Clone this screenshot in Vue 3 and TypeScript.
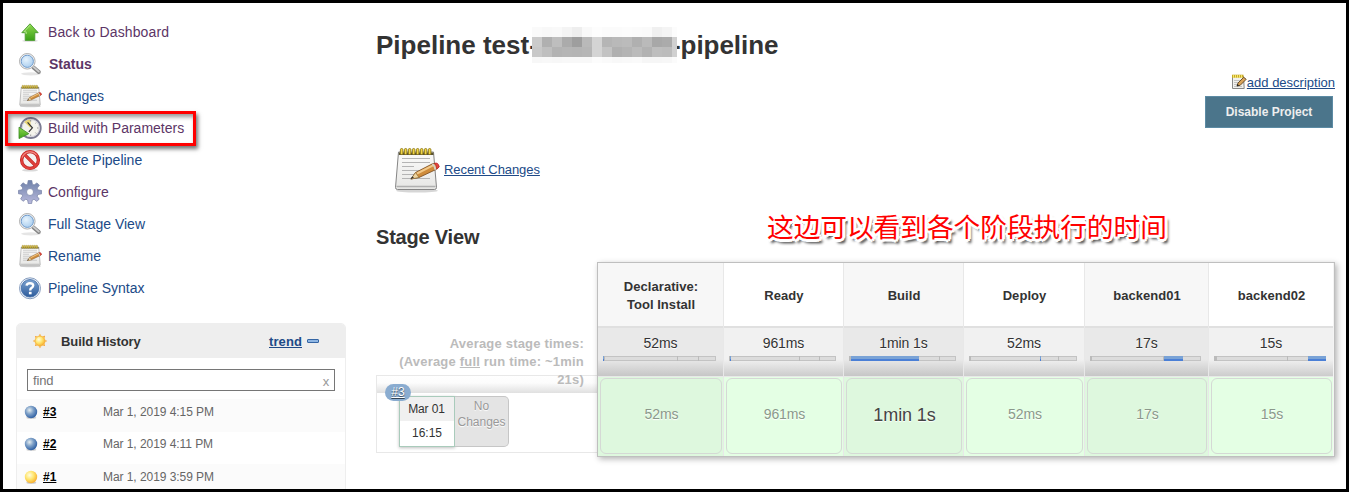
<script setup lang="ts">
interface Task { icon: string; label: string; visited?: boolean; bold?: boolean; marked?: boolean }
interface Segment { kind: 'tick' | 'fill'; left: number; width: number }
interface Stage { name: string[]; avg: string; time: string; large?: boolean; segments: Segment[] }

const tasks: Task[] = [
  { icon: 'up', label: 'Back to Dashboard', visited: true },
  { icon: 'search', label: 'Status', visited: true, bold: true },
  { icon: 'notepad', label: 'Changes' },
  { icon: 'clock', label: 'Build with Parameters', visited: true, marked: true },
  { icon: 'delete', label: 'Delete Pipeline' },
  { icon: 'gear', label: 'Configure', visited: true },
  { icon: 'search', label: 'Full Stage View' },
  { icon: 'notepad', label: 'Rename' },
  { icon: 'help', label: 'Pipeline Syntax' },
]

const builds = [
  { id: '#3', date: 'Mar 1, 2019 4:15 PM', ball: 'blue' },
  { id: '#2', date: 'Mar 1, 2019 4:11 PM', ball: 'blue' },
  { id: '#1', date: 'Mar 1, 2019 3:59 PM', ball: 'yellow' },
]

const tick = (left: number, width = 1): Segment => ({ kind: 'tick', left, width })
const fill = (left: number, width: number): Segment => ({ kind: 'fill', left, width })

const stages: Stage[] = [
  { name: ['Declarative:', 'Tool Install'], avg: '52ms', time: '52ms', segments: [fill(-1, 1), tick(0), tick(73), tick(94)] },
  { name: ['Ready'], avg: '961ms', time: '961ms', segments: [tick(-1), fill(0, 1), tick(69), tick(89)] },
  { name: ['Build'], avg: '1min 1s', time: '1min 1s', large: true, segments: [tick(-1, 2), fill(1, 68), tick(89)] },
  { name: ['Deploy'], avg: '52ms', time: '52ms', segments: [tick(-1, 2), fill(70, 1), tick(88)] },
  { name: ['backend01'], avg: '17s', time: '17s', segments: [tick(-1, 2), tick(72), fill(73, 19)] },
  { name: ['backend02'], avg: '15s', time: '15s', segments: [tick(-1, 3), tick(72), fill(93, 18)] },
]

// Grey levels of the pixelated project name, one row of blocks at a time
const mosaic: number[][] = [
  [250, 248, 249, 244, 238, 249, 253, 251, 251, 252, 251, 250, 240, 244, 252],
  [203, 176, 190, 171, 158, 185, 212, 181, 185, 187, 176, 186, 168, 171, 208],
  [200, 191, 179, 181, 180, 182, 212, 195, 176, 180, 187, 178, 190, 188, 208],
  [247, 248, 247, 248, 248, 248, 252, 250, 248, 249, 250, 246, 246, 247, 251],
]
const grey = (v: number) => `rgb(${v}, ${v}, ${v})`
</script>

<template>
  <div class="page">
    <svg class="defs" width="0" height="0" aria-hidden="true">
      <defs>
        <linearGradient id="g-green" x1="0" y1="0" x2="0" y2="1"><stop offset="0" stop-color="#8fd94f" /><stop offset="1" stop-color="#3ba017" /></linearGradient>
        <linearGradient id="g-paper" x1="0" y1="0" x2="0" y2="1"><stop offset="0" stop-color="#fbfbfa" /><stop offset="1" stop-color="#e6e6e4" /></linearGradient>
        <linearGradient id="g-gear" x1="0" y1="0" x2="0" y2="1"><stop offset="0" stop-color="#6f82aa" /><stop offset="1" stop-color="#b9b9dc" /></linearGradient>
        <linearGradient id="g-help" x1="0" y1="0" x2="0" y2="1"><stop offset="0" stop-color="#7da3d0" /><stop offset="1" stop-color="#2c5b9c" /></linearGradient>
        <radialGradient id="g-lens" cx=".4" cy=".35" r=".7"><stop offset="0" stop-color="#e6f3fd" /><stop offset="1" stop-color="#a9cdee" /></radialGradient>
        <radialGradient id="g-blue" cx=".38" cy=".35" r=".7"><stop offset="0" stop-color="#e6eef0" /><stop offset=".45" stop-color="#7fa1c8" /><stop offset="1" stop-color="#27599f" /></radialGradient>
        <radialGradient id="g-yellow" cx=".38" cy=".35" r=".7"><stop offset="0" stop-color="#fffde0" /><stop offset=".5" stop-color="#ffe56e" /><stop offset="1" stop-color="#f7aa2b" /></radialGradient>

        <symbol id="i-up" viewBox="0 0 24 24">
          <ellipse cx="12" cy="20.8" rx="8" ry="1.3" fill="#000" opacity=".12" />
          <path d="M12 3.8 3.8 12.7H7.2V20.4H16.8V12.7H20.2Z" fill="url(#g-green)" stroke="#4b9b2f" stroke-width=".9" />
          <path d="M12 5.3 6 11.8H8.2V14" fill="none" stroke="#c3f09d" stroke-width=".8" />
        </symbol>
        <symbol id="i-search" viewBox="0 0 24 24">
          <ellipse cx="13" cy="21.8" rx="10" ry="1.6" fill="#000" opacity=".1" />
          <path d="M15.5 15.5 20.8 20" stroke="#858585" stroke-width="4" stroke-linecap="round" />
          <path d="M15.3 14.8 20.8 19.6" stroke="#ccc" stroke-width="1.8" stroke-linecap="round" />
          <circle cx="9.3" cy="9.3" r="7.8" fill="#f4f4f4" stroke="#a6a6a6" stroke-width=".9" />
          <circle cx="9.3" cy="9.3" r="6.1" fill="url(#g-lens)" stroke="#6f9bcc" stroke-width="1" />
        </symbol>
        <symbol id="i-notepad" viewBox="0 0 48 48">
          <ellipse cx="25" cy="44.8" rx="21" ry="1.8" fill="#000" opacity=".16" />
          <path d="M6.5 6H41.5L44.5 41.5Q44.5 43.5 42.5 43.5H5.5Q3.5 43.5 3.5 41.5Z" fill="url(#g-paper)" stroke="#858585" />
          <path d="M4.5 40.5H43.5" stroke="#b0b0b0" stroke-width="1.6" />
          <path d="M7 6.5H41.3L41.6 9H6.8Z" fill="#5c5431" />
          <path d="M10 12.5H38M10 16.5H38M10 20.5H22M10 24.5H34M10 28.5H28M10 32.5H38" stroke="#b4b4b4" stroke-width="1.2" />
          <g fill="#f0d544" stroke="#8c771a" stroke-width=".9"><rect v-for="n in 8" :key="n" :x="4.4 + n * 4" y="2.5" width="2.5" height="6" rx="1.2" /></g>
          <path d="M19 33 23.5 26.5 41 17.5Q46.5 17 47 21L44 23.5 27 31.5Z" fill="#cf8c3b" stroke="#74461b" stroke-width=".8" />
          <path d="M25 27.5 41.5 19.2" stroke="#f2c887" stroke-width="2" />
          <path d="M19 33 23.5 26.5 27 31.5Z" fill="#edd4a0" stroke="#88642f" stroke-width=".6" />
          <path d="M18.2 33.6 22 31.5 20.2 30.4Z" fill="#333" />
          <path d="M42.5 17.2Q46.5 16 47.2 21L44.8 23.2Q45 19.5 42.5 17.2Z" fill="#e34343" stroke="#b22" stroke-width=".6" />
          <path d="M40.3 18Q43 19.5 43.3 23.8" fill="none" stroke="#d8cfc5" stroke-width="1.8" />
        </symbol>
        <symbol id="i-clock" viewBox="0 0 24 24">
          <circle cx="12.7" cy="12" r="10" fill="#f4f3ec" stroke="#7b7b92" stroke-width="1.9" />
          <circle cx="12.7" cy="12" r="8.6" fill="none" stroke="#d3d2dc" />
          <path d="M12.5 12 6.2 6Q9 3.2 12.5 3.4Z" fill="#ead675" />
          <path d="M9.6 6.4 14.4 11.8 10.8 15.8" fill="none" stroke="#333" stroke-width="1.2" />
          <path d="M12.7 4V5.6M19 12H20.5M12.7 18.5V20M17.4 7.4 18.3 6.5M17.4 16.6 18.2 17.5" stroke="#999" />
          <path d="M1 11.2 10.8 17.7 1 22.6Z" fill="url(#g-green)" stroke="#3c8d25" stroke-width=".8" />
        </symbol>
        <symbol id="i-delete" viewBox="0 0 24 24">
          <ellipse cx="12" cy="22.2" rx="8" ry="1.4" fill="#000" opacity=".15" />
          <circle cx="12" cy="12" r="8.4" fill="#f4f1f1" stroke="#bd2222" stroke-width="3.3" />
          <path d="M6.2 6.2 17.8 17.8" stroke="#bd2222" stroke-width="3.2" />
          <circle cx="12" cy="12" r="8.4" fill="none" stroke="#e0403c" stroke-width="2" />
          <path d="M6 6 18 18" stroke="#e0403c" stroke-width="2" />
          <path d="M4.2 9.5A8.4 8.4 0 0 1 18.5 6.8" fill="none" stroke="#f08a85" stroke-width="1.2" />
        </symbol>
        <symbol id="i-gear" viewBox="0 0 24 24">
          <path fill="url(#g-gear)" stroke="#7480a5" stroke-width=".7" fill-rule="evenodd" d="M10.2.5H13.8L14.4 4.2 16.1 4.9 19 2.9 21.4 5.3 19.2 8.1 19.9 9.9 23.6 10.5V13.8L19.9 14.5 19.2 16.2 21.2 19.2 18.7 21.4 16 19.2 14.3 20 13.6 23.6H10.3L9.6 20 7.8 19.2 5 21.3 2.6 18.8 4.6 15.9 4 14.3.4 13.7V10.4L4 9.8 4.8 8 2.7 5.2 5.1 2.8 8 4.9 9.6 4.2ZM12 8.5A3.5 3.5 0 1 0 12 15.5 3.5 3.5 0 1 0 12 8.5Z" />
        </symbol>
        <symbol id="i-help" viewBox="0 0 24 24">
          <circle cx="12" cy="12.3" r="10.5" fill="#eef3f9" stroke="#7a93b8" stroke-width=".9" />
          <circle cx="12" cy="12.3" r="8.8" fill="url(#g-help)" stroke="#3d69a6" stroke-width=".8" />
          <path d="M8.6 9.6Q8.8 7.2 12 7.2 15.2 7.2 15.2 9.6 15.2 10.9 13.6 11.9 12.2 12.7 12.2 14.4" fill="none" stroke="#fff" stroke-width="2.4" />
          <rect x="10.9" y="15.8" width="2.7" height="2.5" fill="#fff" />
        </symbol>
        <symbol id="i-edit" viewBox="0 0 16 16">
          <path d="M1.5 2.5H12.5L13.2 14.5H1.5Z" fill="#f1f1ee" stroke="#888" />
          <path d="M3 6.5H9M3 8.5H7M3 10.5H6M3 12.5H11" stroke="#c4c4c4" />
          <path d="M1 2.2H12.5" stroke="#c5a928" stroke-width="3" />
          <path d="M2.5 1V4M4.5 1V4M6.5 1V4M8.5 1V4M10.5 1V4" stroke="#f7e66b" />
          <path d="M6 12 7 9 12.7 3.3 15.2 5.3 9.2 11.3Z" fill="#d9a45c" stroke="#5d431f" stroke-width=".9" />
          <path d="M5.8 12.3 6.4 10 8.2 11.5Z" fill="#222" />
        </symbol>
        <symbol id="i-sun" viewBox="0 0 16 16">
          <path d="M8 .8 9.4 3.6 13 2.8 12.4 6.4 15.2 8 12.4 9.6 13 13 9.6 12.4 8 15.2 6.4 12.4 3 13 3.6 9.6.8 8 3.6 6.4 3 3 6.4 3.6Z" fill="#f6a22b" />
          <circle cx="8" cy="8" r="5.5" fill="#f5e6cb" />
          <circle cx="8" cy="8" r="4.9" fill="url(#g-yellow)" stroke="#f5ac2c" stroke-width=".7" />
        </symbol>
      </defs>
    </svg>

    <aside class="side">
      <nav class="tasks">
        <a v-for="t in tasks" :key="t.label" class="task" :class="{ visited: t.visited, bold: t.bold }">
          <svg class="icon24"><use :href="`#i-${t.icon}`" /></svg>
          <span>{{ t.label }}</span>
          <i v-if="t.marked" class="mark" />
        </a>
      </nav>

      <section class="history">
        <header class="history-head">
          <svg class="icon16"><use href="#i-sun" /></svg>
          <b>Build History</b>
          <a class="trend">trend</a>
          <i class="collapse" />
        </header>
        <div class="find"><span>find</span><span class="clear">x</span></div>
        <div class="builds">
          <div v-for="b in builds" :key="b.id" class="build">
            <svg class="ball" viewBox="0 0 14 14">
              <ellipse cx="7.3" cy="12.8" rx="5" ry="1" fill="#000" opacity=".2" />
              <circle cx="7" cy="7" r="6.2" :fill="`url(#g-${b.ball})`" />
            </svg>
            <a class="build-id">{{ b.id }}</a>
            <span class="build-date">{{ b.date }}</span>
          </div>
        </div>
      </section>
    </aside>

    <main class="main">
      <h1 class="title">
        <span>Pipeline test-</span>
        <span class="mosaic">
          <span v-for="(row, r) in mosaic" :key="r" class="mosaic-row">
            <i v-for="(v, c) in row" :key="c" :style="{ background: grey(v) }" />
          </span>
        </span>
        <span class="tail">-pipeline</span>
      </h1>

      <div class="actions">
        <a class="describe"><svg class="icon16"><use href="#i-edit" /></svg><span>add description</span></a>
        <button class="disable" type="button">Disable Project</button>
      </div>

      <a class="recent"><svg class="icon48"><use href="#i-notepad" /></svg><span>Recent Changes</span></a>

      <div class="heading">
        <h2>Stage View</h2>
        <p class="note">这边可以看到各个阶段执行的时间</p>
      </div>

      <section class="stage-view">
        <div class="runs">
          <p class="averages">Average stage times:<br>(Average <u>full</u> run time: ~1min<br>21s)</p>
          <div class="run">
            <a class="badge">#3</a>
            <div class="stamp"><span>Mar 01</span><span>16:15</span></div>
            <div class="nochange">No<br>Changes</div>
          </div>
        </div>
        <div class="table">
          <div v-for="s in stages" :key="s.name[0]" class="col">
            <div class="col-name"><span v-for="line in s.name" :key="line">{{ line }}</span></div>
            <div class="col-avg">
              <span>{{ s.avg }}</span>
              <div class="bar">
                <i v-for="(g, n) in s.segments" :key="n" :class="g.kind" :style="{ left: g.left + 'px', width: g.width + 'px' }" />
              </div>
            </div>
            <div class="col-run"><div class="cell" :class="{ large: s.large }">{{ s.time }}</div></div>
          </div>
        </div>
      </section>
    </main>
  </div>
</template>

<style>
body { background: #fff; }
</style>

<style scoped>
* { box-sizing: border-box; }
.page {
  display: grid;
  grid-template-columns: 373px 1fr;
  width: 1349px;
  height: 492px;
  overflow: hidden;
  border: 3px solid #000;
  background: #fff;
  color: #333;
  font-family: "Liberation Sans", Arial, sans-serif;
  font-size: 14px;
  white-space: nowrap;
}
.defs { position: absolute; }
.icon24 { width: 24px; height: 24px; flex: none; }
.icon16 { width: 16px; height: 16px; flex: none; }
.icon48 { width: 48px; height: 48px; flex: none; }

.side { padding: 13px 0 0 13px; height: 486px; overflow: hidden; }
.task { position: relative; display: flex; align-items: center; gap: 6px; height: 32px; padding-left: 2px; color: #204a87; }
.task:first-child { letter-spacing: .12px; }
.visited { color: #5c3566; }
.bold { font-weight: bold; gap: 7px; }
.mark { position: absolute; left: -11px; top: -1px; width: 191px; height: 35px; border: 3px solid #f00; box-shadow: 2px 3px 4px rgba(0,0,0,.55), inset 2px 3px 4px rgba(0,0,0,.4); }

.history { width: 330px; height: 200px; margin-top: 19px; border: 1px solid #eee; border-radius: 5px 5px 0 0; }
.history-head { display: flex; align-items: center; height: 34px; padding: 0 26px 0 15px; background: #eee; border-radius: 4px 4px 0 0; font-size: 13px; }
.history-head b { margin-left: 13px; letter-spacing: -.1px; }
.trend { margin-left: auto; color: #204a87; font-weight: bold; text-decoration: underline; letter-spacing: .1px; }
.collapse { width: 12px; height: 4px; margin-left: 5px; border: 1px solid #3465a4; border-radius: 1px; background: #8fb6e3; }
.find { display: flex; justify-content: space-between; align-items: center; height: 22px; margin: 11px 10px 8px; padding: 0 5px; border: 1px solid #767676; color: #757575; font-size: 13px; letter-spacing: -.15px; }
.clear { color: #999; padding-top: 3px; }
.build { display: flex; align-items: center; height: 32px; padding: 0 0 8px 7px; font-size: 12px; color: #666; }
.build:first-child { height: 33px; }
.build:last-child { height: 33px; padding-bottom: 7px; }
.build:nth-child(odd) { background: #fbfbfb; }
.ball { width: 14px; height: 14px; }
.build-id { width: 60px; margin-left: 5px; color: #000; font-weight: bold; text-decoration: underline; }
.build-date { letter-spacing: -.06px; }

.main { display: flex; flex-direction: column; }
.title { display: flex; align-items: center; height: 36px; margin: 24px 0 0; font-size: 26px; line-height: 36px; }
.title > span:first-child { width: 156px; }
.mosaic { position: relative; z-index: 1; width: 145px; height: 36px; overflow: hidden; background: #fff; }
.mosaic-row { display: flex; height: 10px; }
.mosaic-row i { flex: none; width: 10px; }
.tail { margin-left: -5px; letter-spacing: -.05px; }
.actions { display: flex; flex-direction: column; align-items: flex-end; margin-top: 11px; padding-right: 11px; font-size: 13px; }
.describe { display: flex; align-items: center; height: 16px; color: #204a87; text-decoration: underline; }
.disable { width: 128px; height: 32px; margin: 6px 2px 0 0; padding: 0; border: 1px solid #5c8ba4; background: #4b758b; color: #eee; font: bold 12px "Liberation Sans", Arial, sans-serif; }
.recent { display: flex; align-items: center; align-self: flex-start; gap: 4px; margin: 18px 0 0 16px; height: 48px; color: #204a87; font-size: 13px; letter-spacing: -.07px; text-decoration: underline; }
.recent span { padding-bottom: 2px; }
.heading { display: flex; align-items: center; height: 48px; margin-top: 18px; }
.heading h2 { width: 391px; margin: 0; padding-top: 2px; font-size: 20px; letter-spacing: -.2px; }
.note {
  margin: -20px 0 0; color: #f00; font: 400 26.67px "Noto Sans CJK SC", sans-serif; line-height: 30px;
  text-shadow: -2px -2px 0 #fff, 2px -2px 0 #fff, -2px 2px 0 #fff, 2px 2px 0 #fff, 0 -3px 0 #fff, 0 3px 0 #fff, -3px 0 0 #fff, 3px 0 0 #fff, 3px 4px 3px #000;
}

.stage-view { display: grid; grid-template-columns: 221px 738px; height: 195px; margin-top: 2px; }
.runs { display: grid; grid-template-rows: 113px 78px; }
.averages { z-index: 1; margin: 0; padding: 73px 13px 0 0; color: #bbb; font-size: 13px; font-weight: bold; line-height: 18px; letter-spacing: .2px; text-align: right; }
.run { position: relative; display: flex; align-items: flex-start; padding: 20px 0 0 22px; border: solid #e8e8e8; border-width: 1px 0 1px 1px; background: linear-gradient(#fff, #fcfcfc 7px, #e0e0e0 17px, transparent 17px); font-size: 12px; }
.badge { position: absolute; left: 8px; top: 8px; z-index: 2; width: 26px; height: 17px; border-radius: 9px; background: #8aacd0; color: #fff; font-size: 12px; line-height: 17px; text-align: center; text-decoration: underline; text-shadow: 0 1px 1px #345; }
.stamp { display: flex; flex-direction: column; width: 56px; height: 51px; border: 1px solid #a9cbbb; background: #fff; color: #333; line-height: 24px; text-align: center; box-shadow: 0 1px 3px rgba(0,0,0,.25); }
.stamp span:first-child { height: 24px; padding-right: 1px; background: #f0f0f0; letter-spacing: -.1px; }
.nochange { width: 54px; height: 51px; padding-top: 1px; border: solid #c6c6c6; border-width: 1px 1px 1px 0; border-radius: 0 5px 5px 0; background: #e4e4e4; color: #999; line-height: 16px; text-align: center; text-shadow: 0 1px 1px #fff; }

.table { display: grid; grid-template-columns: 126px 120px 120px 121px 124px 125px; border: 1px solid #bfbfbf; box-shadow: 2px 2px 6px rgba(0,0,0,.3); background: #fff; z-index: 1; font-size: 13px; }
.col { display: grid; grid-template-rows: 65px 48px 80px; border-right: 1px solid #e8e8e8; color: #333; text-align: center; }
.col:last-child { border-right-color: #f4f4f4; }
.col-name { display: flex; flex-direction: column; align-items: center; justify-content: center; border-bottom: 2px solid #e0e0e0; font-weight: bold; line-height: 18px; padding: 2px 0 0 1px; letter-spacing: .05px; background: #fff; }
.col:nth-child(odd) .col-name { background: #f7f7f7; }
.col-avg { padding: 7px 7px 0 5px; background: linear-gradient(#f1f1f1 65%, #ccc); line-height: 16px; font-size: 14px; text-shadow: 0 1px 1px #fff; }
.col-avg span { padding-left: 2px; letter-spacing: -.1px; }
.col:nth-child(odd) .col-avg { background: linear-gradient(#e9e9e9 65%, #c6c6c6); }
.bar { position: relative; height: 5px; margin-top: 5px; border: 1px solid #c3c3c3; background: #dcdcdc; }
.bar i { position: absolute; top: -1px; height: 5px; }
.tick { background: #bbb; }
.fill { background: linear-gradient(#7aa3d6 50%, #4a7fd6 60%); }
.col-run { padding: 2px 1px 3px 2px; background: #e4ffe4; border-top: 1px solid #e8e8e8; }
.col:nth-child(odd) .col-run { background: #def8de; }
.cell { display: flex; align-items: center; justify-content: center; height: 76px; margin-top: -1px; padding: 0 0 4px 1px; border: 1px solid #d5d9d5; border-radius: 6px; color: #8b988b; font-size: 14px; letter-spacing: -.1px; text-shadow: 0 1px 1px #fff; }
.large { padding-bottom: 2px; color: #444; font-size: 18px; }
</style>
